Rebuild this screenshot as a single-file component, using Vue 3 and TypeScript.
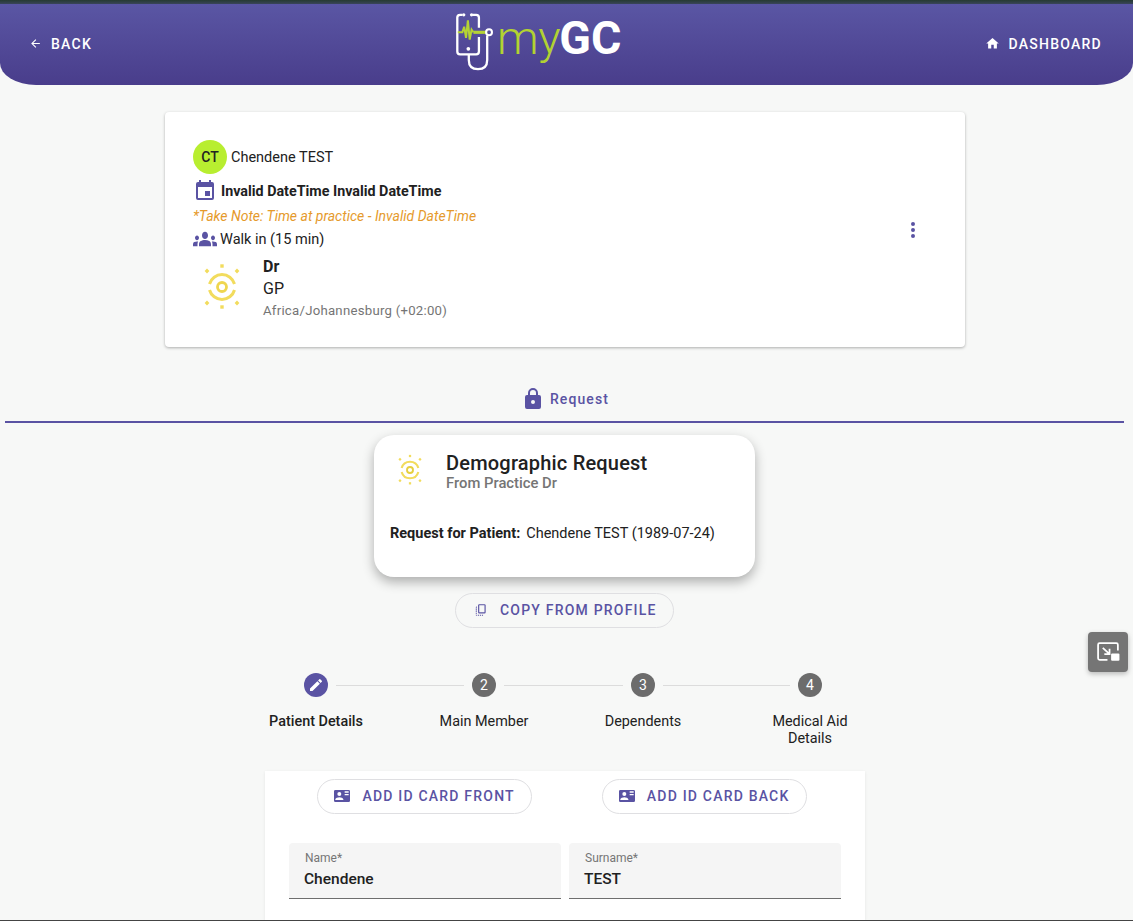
<script setup lang="ts">
interface Step { label: string; num?: string; active?: boolean; width: number; line: number }
const steps: Step[] = [
  { label: 'Patient Details', active: true, width: 100, line: 128 },
  { label: 'Main Member', num: '2', width: 94, line: 119 },
  { label: 'Dependents', num: '3', width: 82, line: 127 },
  { label: 'Medical Aid Details', num: '4', width: 84, line: 0 },
]
const rays: [number, number][] = [[0, -21], [0, 20], [-15, -16], [15, -16], [-15, 16], [15, 16]]
</script>

<template>
  <div class="page">
    <div class="topline"></div>
    <header class="hero">
      <button class="nav-btn back">
        <svg class="nav-ic" viewBox="0 0 24 24"><path fill="currentColor" d="M20 11H7.830l5.590-5.590L12 4l-8 8 8 8 1.410-1.410L7.830 13H20z"/></svg>
        <span>BACK</span>
      </button>
      <div class="logo">
        <svg class="logo-mark" viewBox="0 0 50 64" fill="none">
          <path d="M8 3H5.500Q2.500 3 2.500 6V43Q2.500 46 5.500 46H23Q26 46 26 43V27M26 17V6Q26 3 23 3H19" stroke="#fff" stroke-width="2.500"/>
          <circle cx="9.500" cy="3" r="1.800" fill="#fff"/><circle cx="18" cy="3" r="1.800" fill="#fff"/>
          <circle cx="14.500" cy="40" r="2" fill="#fff"/>
          <path d="M3 22H8L10 16L12 28L14 9L16 30L18 19L20 22" stroke="#b5d334" stroke-width="2.200"/>
          <path d="M20 22H35" stroke="#b5d334" stroke-width="3.400"/>
          <circle cx="37" cy="22" r="3.200" stroke="#fff" stroke-width="2.200"/>
          <path d="M35 25.500V52Q35 62 25 62Q15 62 15 52V46" stroke="#fff" stroke-width="2.500"/>
        </svg>
        <span class="my">my</span><span class="gc">GC</span>
      </div>
      <button class="nav-btn dash">
        <svg class="nav-ic home" viewBox="0 0 24 24"><path fill="currentColor" d="M10 20v-6h4v6h5v-8h3L12 3 2 12h3v8z"/></svg>
        <span>DASHBOARD</span>
      </button>
    </header>

    <section class="booking">
      <div class="booking-main">
        <div class="row patient">
          <span class="avatar">CT</span>
          <span>Chendene TEST</span>
        </div>
        <div class="row date">
          <svg class="cal" viewBox="0 0 24 24"><path fill="#5a53a3" d="M19 3h-1V1h-2v2H8V1H6v2H5a2 2 0 0 0-2 2v14a2 2 0 0 0 2 2h14a2 2 0 0 0 2-2V5a2 2 0 0 0-2-2zm0 16H5V8h14zM17 12h-5v5h5z"/></svg>
          <b>Invalid DateTime Invalid DateTime</b>
        </div>
        <div class="note">*Take Note: Time at practice - Invalid DateTime</div>
        <div class="row walk">
          <svg class="grp" viewBox="0 0 24 24"><path transform="translate(0 -2.400) scale(1 1.200)" fill="#5a53a3" d="M12 12.750c1.630 0 3.070.39 4.240.9 1.080.48 1.760 1.560 1.760 2.730V18H6v-1.610c0-1.180.68-2.260 1.760-2.730 1.170-.52 2.610-.91 4.240-.91zM4 13c1.100 0 2-.9 2-2s-.9-2-2-2-2 .9-2 2 .9 2 2 2zm1.130 1.100C4.760 14.040 4.390 14 4 14c-.99 0-1.930.21-2.780.58A2 2 0 0 0 0 16.430V18h4.500v-1.610c0-.83.23-1.610.63-2.290zM20 13c1.100 0 2-.9 2-2s-.9-2-2-2-2 .9-2 2 .9 2 2 2zm4 3.430c0-.81-.48-1.530-1.220-1.850A6.950 6.950 0 0 0 20 14c-.39 0-.76.04-1.130.1.4.68.63 1.460.63 2.290V18H24zM12 6c1.660 0 3 1.340 3 3s-1.340 3-3 3-3-1.340-3-3 1.340-3 3-3z"/></svg>
          <span>Walk in (15 min)</span>
        </div>
        <div class="doctor">
          <svg class="sun" viewBox="-24 -24 48 48" fill="none">
            <rect v-for="r in rays" :key="r.join()" :x="r[0] - 1.7" :y="r[1] - 1.7" width="3.400" height="3.400" :transform="r[0] ? `rotate(45 ${r[0]} ${r[1]})` : ''" fill="#f2dc5d"/>
            <circle r="4.500" stroke="#efd64f" stroke-width="2.800"/>
            <path d="M-12.500 -3A13 13 0 0 1 12.500 -3M-12.500 3A13 13 0 0 0 12.500 3" stroke="#f2dc5d" stroke-width="3"/>
          </svg>
          <div class="doc-text">
            <b>Dr</b>
            <span class="gp">GP</span>
            <span class="tz">Africa/Johannesburg (+02:00)</span>
          </div>
        </div>
      </div>
      <svg class="more" viewBox="0 0 24 24"><path fill="#5a53a3" d="M12 8a2 2 0 1 0 0-4 2 2 0 0 0 0 4zm0 2a2 2 0 1 0 0 4 2 2 0 0 0 0-4zm0 6a2 2 0 1 0 0 4 2 2 0 0 0 0-4z"/></svg>
    </section>

    <div class="tab">
      <svg class="lock" viewBox="0 0 24 24"><path fill="#5a53a3" d="M18 8h-1V6A5 5 0 0 0 7 6v2H6a2 2 0 0 0-2 2v10a2 2 0 0 0 2 2h12a2 2 0 0 0 2-2V10a2 2 0 0 0-2-2zm-6 9a2 2 0 1 1 0-4 2 2 0 0 1 0 4zM9 8V6a3 3 0 0 1 6 0v2z"/></svg>
      <span>Request</span>
    </div>
    <div class="tab-rule"></div>

    <section class="request">
      <div class="req-head">
        <svg class="sun small" viewBox="-24 -24 48 48" fill="none">
          <rect v-for="r in rays" :key="r.join()" :x="r[0] - 1.7" :y="r[1] - 1.7" width="3.400" height="3.400" :transform="r[0] ? `rotate(45 ${r[0]} ${r[1]})` : ''" fill="#f2dc5d"/>
          <circle r="4.500" stroke="#e6cf3f" stroke-width="2.800"/>
          <path d="M-12.500 -3A13 13 0 0 1 12.500 -3M-12.500 3A13 13 0 0 0 12.500 3" stroke="#f2dc5d" stroke-width="3.200"/>
        </svg>
        <div>
          <div class="req-title">Demographic Request</div>
          <div class="req-sub">From Practice Dr</div>
        </div>
      </div>
      <div class="req-for"><b>Request for Patient:</b><span>Chendene TEST (1989-07-24)</span></div>
    </section>

    <button class="pill copy">
      <svg class="copy-ic" viewBox="0 0 24 24"><path fill="#5a53a3" d="M18 2H9a2 2 0 0 0-2 2v12a2 2 0 0 0 2 2h9a2 2 0 0 0 2-2V4a2 2 0 0 0-2-2zm0 14H9V4h9zM3 15v-2h2v2zm0-5.500h2v2H3zM10 22h2v-2h-2zm-7-3.500v-2h2v2zM5 22v-2H3c0 1.100.9 2 2 2zm3.500 0h-2v-2h2zm5 0h2v-2h-2zM3 8h2V6c-1.100 0-2 .9-2 2z"/></svg>
      <span>COPY FROM PROFILE</span>
    </button>

    <div class="stepper">
      <template v-for="s in steps" :key="s.label">
        <div class="step" :class="{ on: s.active }">
          <span class="dot">
            <svg v-if="s.active" viewBox="0 0 24 24" class="pen"><path fill="#fff" d="M3 17.250V21h3.750L17.810 9.940l-3.750-3.750zM20.710 7.040a1 1 0 0 0 0-1.410l-2.340-2.340a1 1 0 0 0-1.410 0l-1.830 1.830 3.750 3.750z"/></svg>
            <template v-else>{{ s.num }}</template>
          </span>
          <span class="step-label" :style="{ width: s.width + 'px' }">{{ s.label }}</span>
        </div>
        <span v-if="s.line" class="connector" :style="{ width: s.line + 'px' }"></span>
      </template>
    </div>

    <section class="form">
      <div class="id-row">
        <button class="pill">
          <svg class="id-ic" viewBox="0 0 24 24"><path fill="#5a53a3" d="M22 3H2a2 2 0 0 0-2 2v14a2 2 0 0 0 2 2h20a2 2 0 0 0 2-2V5a2 2 0 0 0-2-2zM8 6a3 3 0 1 1 0 6 3 3 0 0 1 0-6zm6 12H2v-1c0-2 4-3.100 6-3.100S14 15 14 17zm8-7h-6V9h6zm0-4h-6V5h6z"/></svg>
          <span>ADD ID CARD FRONT</span>
        </button>
        <button class="pill">
          <svg class="id-ic" viewBox="0 0 24 24"><path fill="#5a53a3" d="M22 3H2a2 2 0 0 0-2 2v14a2 2 0 0 0 2 2h20a2 2 0 0 0 2-2V5a2 2 0 0 0-2-2zM8 6a3 3 0 1 1 0 6 3 3 0 0 1 0-6zm6 12H2v-1c0-2 4-3.100 6-3.100S14 15 14 17zm8-7h-6V9h6zm0-4h-6V5h6z"/></svg>
          <span>ADD ID CARD BACK</span>
        </button>
      </div>
      <div class="fields">
        <div class="field"><label>Name*</label><span>Chendene</span></div>
        <div class="field"><label>Surname*</label><span>TEST</span></div>
      </div>
    </section>
    <div class="bottomline"></div>

    <button class="pip" aria-label="Exit picture in picture">
      <svg viewBox="0 0 24 24" fill="none">
        <path d="M11 19H3.500A1.500 1.500 0 0 1 2 17.500V4.500A1.500 1.500 0 0 1 3.500 3h16A1.500 1.500 0 0 1 21 4.500V10" stroke="#fff" stroke-width="1.700"/>
        <path d="M6.500 7.500L12.500 13M8 13.500h5v-5" stroke="#fff" stroke-width="1.700"/>
        <rect x="14.500" y="13" width="8" height="7" rx="1" fill="#fff"/>
      </svg>
    </button>
  </div>
</template>

<style>
html, body { margin: 0; background: #f7f8f7; }
</style>

<style scoped>
.page {
  position: relative;
  height: 921px;
  overflow: hidden;
  box-sizing: border-box;
  padding-right: 3px;
  background: #f7f8f7;
  font-family: Roboto, "Liberation Sans", sans-serif;
  font-size: 14.5px;
  color: #212121;
  display: flex;
  flex-direction: column;
  align-items: center;
}
button { font-family: inherit; background: none; border: 0; padding: 0; }
.topline { width: 1133px; height: 4px; flex: none; align-self: flex-start; background: linear-gradient(#263a31, #39455a); }
.bottomline { width: 1133px; height: 1px; flex: none; align-self: flex-start; background: #444; }
.hero {
  width: 1133px;
  height: 81px;
  flex: none;
  align-self: flex-start;
  box-sizing: border-box;
  padding: 0 31px 0 29px;
  display: flex;
  align-items: center;
  justify-content: space-between;
  border-radius: 0 0 36px 36px / 0 0 22px 22px;
  background: linear-gradient(#5a56a4, #493d8b);
  position: relative;
}
.nav-btn {
  display: flex;
  align-items: center;
  color: #fff;
  font-size: 14px;
  font-weight: 500;
  letter-spacing: 1.25px;
  margin-top: -2px;
}
.nav-ic { width: 13px; height: 13px; margin-right: 9px; }
.home { width: 15px; height: 15px; margin-right: 8px; }
.logo {
  position: absolute;
  left: 455px;
  top: 6px;
  display: flex;
  align-items: baseline;
  height: 62px;
}
.logo-mark { width: 46px; height: 59px; align-self: flex-start; margin-top: 2px; }
.my { color: #b2d232; font-size: 47px; font-weight: 300; line-height: 56px; letter-spacing: -.4px; margin-left: -4px; }
.gc { color: #fff; font-size: 46.500px; font-weight: 700; line-height: 56px; margin-left: -1px; }

.booking {
  width: 800px;
  height: 235px;
  flex: none;
  margin-top: 27px;
  box-sizing: border-box;
  padding: 28px 40px 0 28px;
  background: #fff;
  border-radius: 4px;
  box-shadow: 0 1px 3px rgba(0,0,0,.3);
  display: flex;
  align-items: flex-start;
  justify-content: space-between;
}
.row { display: flex; align-items: center; }
.patient { gap: 4px; height: 34px; }
.avatar {
  width: 34px;
  height: 34px;
  border-radius: 50%;
  background: #b8ee30;
  color: #222;
  font-size: 14px;
  font-weight: 500;
  display: flex;
  align-items: center;
  justify-content: center;
}
.date { height: 24px; margin-top: 5px; gap: 4px; font-size: 14.300px; }
.cal { width: 24px; height: 24px; }
.note { color: #e59a2c; font-size: 14px; font-style: italic; line-height: 16px; margin-top: 5px; }
.walk { height: 24px; margin-top: 3px; gap: 3px; }
.grp { width: 24px; height: 24px; }
.doctor { display: flex; align-items: flex-start; margin-top: 5px; margin-left: 5px; }
.sun { width: 48px; height: 48px; margin-top: 7px; }
.doc-text { display: flex; flex-direction: column; margin-left: 17px; }
.doc-text b { font-size: 16px; font-weight: 700; line-height: 21px; }
.gp { line-height: 24px; font-size: 16px; }
.tz { font-size: 13.200px; color: #757575; line-height: 20px; letter-spacing: .25px; }
.more { width: 24px; height: 24px; margin-top: 78px; }

.tab {
  height: 30px;
  margin-top: 37px;
  flex: none;
  display: flex;
  align-items: center;
  gap: 5px;
  color: #5a53a3;
  font-size: 14px;
  font-weight: 500;
  letter-spacing: 1.100px;
}
.lock { width: 24px; height: 24px; }
.tab-rule { width: 1119px; height: 2px; flex: none; margin-top: 7px; margin-left: -1px; background: #5a53a3; }

.request {
  width: 381px;
  height: 142px;
  flex: none;
  margin-top: 12px;
  margin-left: -1px;
  box-sizing: border-box;
  padding: 16px;
  border-radius: 20px;
  background: #fff;
  box-shadow: 0 5px 12px rgba(0,0,0,.3);
}
.req-head { display: flex; gap: 20px; margin-left: 4px; }
.sun.small { width: 32px; height: 32px; margin: 3px 0 0; }
.req-title { font-size: 20px; font-weight: 500; line-height: 24px; letter-spacing: .2px; }
.req-sub { font-size: 14.800px; color: #757575; font-weight: 500; line-height: 16px; }
.req-for { display: flex; gap: 6px; margin-top: 33px; line-height: 20px; }
.req-for b { font-weight: 700; }

.pill {
  height: 35px;
  box-sizing: border-box;
  display: inline-flex;
  align-items: center;
  white-space: nowrap;
  border: 1px solid #dfdfe2;
  border-radius: 18px;
  color: #5a53a3;
  font-size: 14px;
  font-weight: 500;
  letter-spacing: 1.200px;
  padding: 0 16px 2px;
  background: transparent;
}
.copy { flex: none; width: 219px; margin-top: 16px; margin-left: -1px; padding-left: 18px; }
.copy-ic { width: 14px; height: 14px; margin-right: 12px; }
.stepper {
  flex: none;
  display: flex;
  align-items: flex-start;
  margin-top: 45px;
  margin-left: -4px;
}
.step { flex: none; width: 24px; display: flex; flex-direction: column; align-items: center; }
.dot {
  width: 24px;
  height: 24px;
  border-radius: 50%;
  background: #6c6c6c;
  color: #fff;
  font-size: 14px;
  display: flex;
  align-items: center;
  justify-content: center;
}
.on .dot { background: #5a53a3; }
.pen { width: 16px; height: 16px; }
.step-label {
  margin-top: 16px;
  flex: none;
  text-align: center;
  font-size: 14.400px;
  line-height: 17px;
  color: #212121;
}
.on .step-label { font-weight: 500; }
.connector { flex: none; height: 1px; margin: 12px 8px 0; background: #dcdcdc; }

.form {
  width: 600px;
  flex: 1;
  margin-top: 24px;
  box-sizing: border-box;
  padding-top: 8px;
  background: #fff;
  box-shadow: 0 1px 3px rgba(0,0,0,.08);
}
.id-row { display: flex; justify-content: center; gap: 70px; padding-right: 6px; }
.id-ic { width: 16px; height: 16px; margin-right: 12px; }
.fields { display: flex; gap: 8px; margin: 29px 24px 0; }
.field {
  flex: 1;
  height: 56px;
  box-sizing: border-box;
  padding: 9px 15px 0;
  background: #f5f5f5;
  border-bottom: 1px solid #6e6e6e;
  border-radius: 4px 4px 0 0;
  display: flex;
  flex-direction: column;
}
.field label { font-size: 12px; color: #757575; line-height: 13px; margin-left: 1px; }
.field span { font-size: 15.500px; font-weight: 500; line-height: 20px; margin-top: 4px; }

.pip {
  position: absolute;
  left: 1088px;
  top: 632px;
  width: 40px;
  height: 40px;
  border-radius: 4px;
  background: #757575;
  box-shadow: 0 2px 5px rgba(0,0,0,.25);
  display: flex;
  align-items: center;
  justify-content: center;
}
.pip svg { width: 25px; height: 25px; }
</style>
